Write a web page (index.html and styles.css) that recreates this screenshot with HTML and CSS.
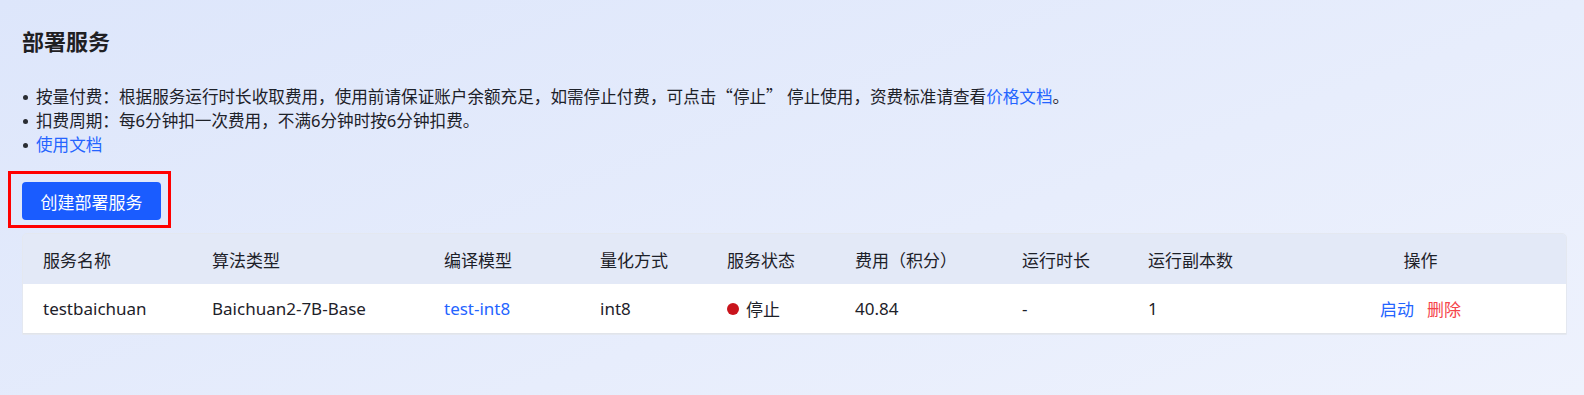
FILE: index.html
```html
<!DOCTYPE html>
<html lang="zh-CN">
<head>
    <meta charset="UTF-8">
    <meta name="viewport" content="width=device-width, initial-scale=1.0">
    <title>部署服务</title>
    <link rel="stylesheet" href="styles.css">
</head>
<body>
    <div class="page">
        <h1 class="page-title">部署服务</h1>

        <ul class="notes">
            <li>按量付费：根据服务运行时长收取费用，使用前请保证账户余额充足，如需停止付费，可点击<span class="cjk">“停止”</span> 停止使用，资费标准请查看<a href="#">价格文档</a>。</li>
            <li>扣费周期：每6分钟扣一次费用，不满6分钟时按6分钟扣费。</li>
            <li><a href="#">使用文档</a></li>
        </ul>

        <div class="highlight">
            <button class="create-btn">创建部署服务</button>
        </div>

        <div class="service-table">
            <div class="row head">
                <div class="cell">服务名称</div>
                <div class="cell">算法类型</div>
                <div class="cell">编译模型</div>
                <div class="cell">量化方式</div>
                <div class="cell">服务状态</div>
                <div class="cell">费用（积分）</div>
                <div class="cell">运行时长</div>
                <div class="cell">运行副本数</div>
                <div class="cell center">操作</div>
            </div>
            <div class="row">
                <div class="cell">testbaichuan</div>
                <div class="cell">Baichuan2-7B-Base</div>
                <div class="cell"><a href="#">test-int8</a></div>
                <div class="cell">int8</div>
                <div class="cell"><span class="status-dot"></span>停止</div>
                <div class="cell">40.84</div>
                <div class="cell">-</div>
                <div class="cell">1</div>
                <div class="cell center actions">
                    <a href="#">启动</a>
                    <a href="#" class="danger">删除</a>
                </div>
            </div>
        </div>
    </div>
</body>
</html>
```

FILE: styles.css
```css
:root {
    --text-color: #1d2129;
    --link-color: #2464ff;
    --danger-color: #f5454b;
}

body {
    margin: 0;
    min-height: 395px;
    font-family: "Noto Sans", "Noto Sans CJK SC", sans-serif;
    color: var(--text-color);
    background: linear-gradient(160deg, #dde6fb 0%, #e7edfc 60%, #eef2fd 100%);
}

a {
    color: var(--link-color);
    text-decoration: none;
}

.cjk {
    font-family: "Noto Sans CJK SC", sans-serif;
}

.page {
    padding: 26px 21px 0 22px;
}

.page-title {
    margin: 0;
    font-size: 22px;
    line-height: 30px;
    font-weight: 700;
    color: #1f2023;
}

.notes {
    list-style: none;
    margin: 28px 0 0;
    padding: 0;
    font-size: 16.6px;
    line-height: 24px;
}

/* 圆点 */
.notes li::before {
    content: "";
    display: inline-block;
    width: 5px;
    height: 5px;
    border-radius: 50%;
    background: #2a2d33;
    margin: 0 8px 0 1px;
    vertical-align: middle;
    position: relative;
    top: -1px;
}

.highlight {
    display: inline-block;
    margin: 14px 0 0 -14px;
    padding: 8px 7px 5px 11px;
    border: 3px solid #ff0000;
}

.create-btn {
    display: block;
    width: 139px;
    height: 38px;
    border: none;
    border-radius: 4px;
    background: #1a5cff;
    color: #fff;
    font-family: inherit;
    font-size: 17px;
    cursor: pointer;
}

.service-table {
    margin-top: 5px;
    width: 1543px;
    border: 1px solid #e4e8f0;
    border-radius: 5px 5px 0 0;
    overflow: hidden;
    font-size: 17px;
}

.row {
    display: grid;
    grid-template-columns: 169px 232px 156px 127px 128px 167px 126px 147px 1fr;
    align-items: center;
    height: 49px;
    background: #fff;
    border-bottom: 1px solid #e1e4ea;
}

.row.head {
    height: 50px;
    background: #e3e9f7;
    border-bottom: none;
}

.cell {
    padding-left: 20px;
    white-space: nowrap;
    display: flex;
    align-items: center;
}

.cell.center {
    justify-content: center;
    padding-left: 0;
}

.status-dot {
    width: 12px;
    height: 12px;
    border-radius: 50%;
    background: #c9141c;
    margin-right: 7px;
}

.actions {
    gap: 13px;
}

.actions .danger {
    color: var(--danger-color);
}
```
